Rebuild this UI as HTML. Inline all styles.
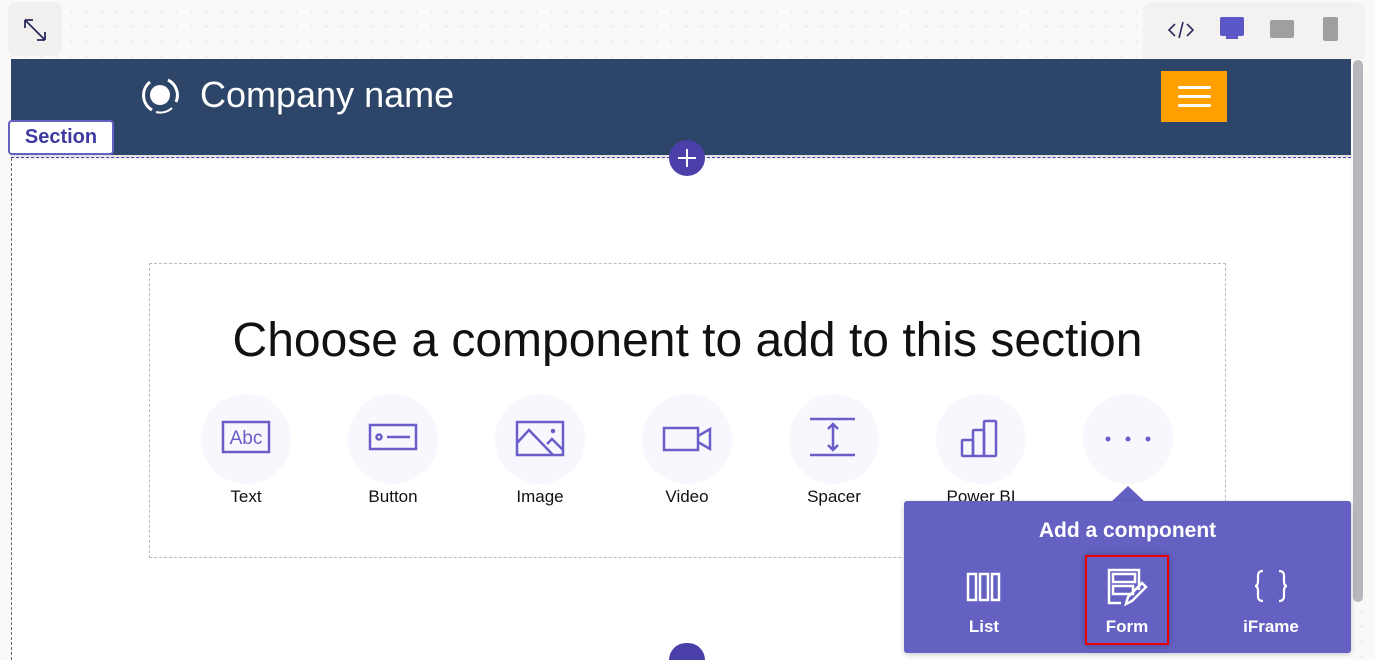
<!DOCTYPE html>
<html><head><style>
*{margin:0;padding:0;box-sizing:border-box}
html,body{width:1375px;height:660px;overflow:hidden}
body{position:relative;font-family:"Liberation Sans",sans-serif;
background-color:#faf9f8;background-image:radial-gradient(#eceae8 1.2px,transparent 1.3px);background-size:15px 15px;background-position:4px 4px}
.abs{position:absolute}
.circ{position:absolute;width:90px;height:90px;border-radius:50%;background:#f8f7fd;top:394px}
.lbl{position:absolute;top:487px;width:120px;text-align:center;font-size:17px;color:#111}
</style></head><body>
<div class="abs" style="left:8px;top:2px;width:54px;height:54px;background:#f1f0ef;border-radius:8px"></div>
<svg class="abs" style="left:22px;top:17px" width="26" height="26" viewBox="0 0 26 26" fill="none" stroke="#2b2a5e" stroke-width="1.8"><path d="M3 3L23 23M3 3h8M3 3v8M23 23h-8M23 23v-8"/></svg>
<div class="abs" style="left:1143px;top:2px;width:222px;height:57px;background:#f3f2f1;border-radius:8px 8px 0 0"></div>
<svg class="abs" style="left:1168px;top:20px" width="26" height="20" fill="none" stroke="#2b2a5e" stroke-width="1.6"><path d="M7 4L1 10l6 6M19 4l6 6-6 6M15 2l-4 16"/></svg>
<div class="abs" style="left:1220px;top:17px;width:24px;height:19px;background:#5b57c8;border-radius:2px"></div>
<div class="abs" style="left:1226px;top:35px;width:12px;height:4px;border-top:2px solid #5b57c8;border-bottom:2px solid #5b57c8"></div>
<div class="abs" style="left:1270px;top:20px;width:24px;height:18px;background:#a19f9d;border-radius:2px"></div>
<div class="abs" style="left:1323px;top:17px;width:15px;height:24px;background:#a19f9d;border-radius:2px"></div>
<div class="abs" style="left:11px;top:59px;width:1340px;height:601px;background:#fff"></div>
<div class="abs" style="left:11px;top:59px;width:1340px;height:96px;background:#2d4569"></div>
<div class="abs" style="left:11px;top:155px;width:1340px;height:6px;background:linear-gradient(#ddd,#fff)"></div>
<div class="abs" style="left:11px;top:157px;width:1340px;border-top:1px dashed #4b3faa"></div>
<div class="abs" style="left:11px;top:158px;height:502px;border-left:1px dashed #666"></div>
<svg class="abs" style="left:140px;top:74px" width="42" height="42" viewBox="0 0 42 42"><circle cx="20" cy="21" r="10" fill="#fff"/><path d="M10 8A17 17 0 0 0 12 36" stroke="#fff" stroke-width="3" fill="none"/><path d="M28 6A17 17 0 0 1 36 28" stroke="#fff" stroke-width="3" fill="none"/><path d="M32 34A17 17 0 0 1 16 38" stroke="#fff" stroke-width="2" fill="none"/></svg>
<div class="abs" style="left:200px;top:74px;font-size:36px;color:#fff">Company name</div>
<div class="abs" style="left:1161px;top:71px;width:66px;height:51px;background:#ffa000"></div>
<div class="abs" style="left:1178px;top:86px;width:33px;height:3px;background:#fff;box-shadow:0 9px 0 #fff,0 18px 0 #fff;border-radius:2px"></div>
<div class="abs" style="left:8px;top:120px;width:106px;height:35px;background:#fff;border:2px solid #6461c2;border-radius:4px;text-align:center;font-weight:bold;font-size:20px;color:#3d3aa0;line-height:31px">Section</div>
<div class="abs" style="left:669px;top:140px;width:36px;height:36px;border-radius:50%;background:#4b3faa"></div>
<div class="abs" style="left:678px;top:157px;width:18px;height:2px;background:#fff"></div>
<div class="abs" style="left:686px;top:149px;width:2px;height:18px;background:#fff"></div>
<div class="abs" style="left:669px;top:643px;width:36px;height:17px;border-radius:18px 18px 0 0;background:#4b3faa"></div>
<div class="abs" style="left:1353px;top:60px;width:10px;height:542px;background:#b8b7bc;border-radius:5px"></div>
<div class="abs" style="left:149px;top:263px;width:1077px;height:295px;border:1px dashed #bbb"></div>
<div class="abs" style="left:149px;top:313px;width:1077px;text-align:center;font-size:48px;color:#111">Choose a component to add to this section</div>
<div class="circ" style="left:201px"></div><div class="circ" style="left:348px"></div><div class="circ" style="left:495px"></div><div class="circ" style="left:642px"></div><div class="circ" style="left:789px"></div><div class="circ" style="left:936px"></div><div class="circ" style="left:1083px"></div>
<svg class="abs" style="left:0;top:0" width="1375" height="660" fill="none" stroke="#6a5fc9" stroke-width="2.5">
<rect x="223" y="422" width="46" height="30"/>
<text x="246" y="444" font-size="19" fill="#6a5fc9" stroke="none" text-anchor="middle" font-family="Liberation Sans,sans-serif">Abc</text>
<rect x="370" y="425" width="46" height="24"/><circle cx="379" cy="437" r="2.5"/><path d="M387 437h23"/>
<rect x="517" y="422" width="46" height="33"/><path d="M517 443l12-13 24 25M547 444l5-5 11 11"/><circle cx="553" cy="431" r="1" fill="#6a5fc9"/>
<rect x="664" y="428" width="34" height="22"/><path d="M698 436l12-7v20l-12-7"/>
<path d="M810 419h45M810 455h45M833 424v26M828 429l5-5 5 5M828 445l5 5 5-5"/>
<rect x="962" y="440" width="11" height="16" rx="1"/><rect x="973" y="430" width="11" height="26" rx="1"/><rect x="984" y="421" width="12" height="35" rx="1"/>
<g fill="#6a5fc9" stroke="none"><circle cx="1108" cy="439" r="2.5"/><circle cx="1128" cy="439" r="2.5"/><circle cx="1148" cy="439" r="2.5"/></g>
</svg>
<div class="lbl" style="left:186px">Text</div><div class="lbl" style="left:333px">Button</div><div class="lbl" style="left:480px">Image</div><div class="lbl" style="left:627px">Video</div><div class="lbl" style="left:774px">Spacer</div><div class="lbl" style="left:921px">Power BI</div>
<div class="abs" style="left:1111px;top:486px;width:0;height:0;border-left:17px solid transparent;border-right:17px solid transparent;border-bottom:16px solid #6461c2"></div>
<div class="abs" style="left:904px;top:501px;width:447px;height:152px;background:#6461c2;border-radius:3px;box-shadow:0 2px 6px rgba(0,0,0,.2)"></div>
<div class="abs" style="left:904px;top:519px;width:447px;text-align:center;color:#fff;font-weight:bold;font-size:21px">Add a component</div>
<div class="abs" style="left:1085px;top:555px;width:84px;height:90px;border:2px solid #e00;box-shadow:0 0 6px rgba(0,0,0,.3)"></div>
<svg class="abs" style="left:0;top:0" width="1375" height="660" fill="none" stroke="#fff" stroke-width="2.5">
<rect x="968" y="574" width="8" height="26"/><rect x="980" y="574" width="8" height="26"/><rect x="992" y="574" width="7" height="26"/>
<path d="M1139 590v-20h-30v33h12M1113 574h22v8h-22zM1113 586h20v8h-20z"/><path d="M1126 604l2-7 14-14 4 4-14 14z"/>
<path d="M1263 571c-4 0-5 2-5 5v5c0 3-1 5-3 5 2 0 3 2 3 5v5c0 3 1 5 5 5M1279 571c4 0 5 2 5 5v5c0 3 1 5 3 5-2 0-3 2-3 5v5c0 3-1 5-5 5" stroke-width="2.2"/>
</svg>
<div class="abs" style="left:944px;top:617px;width:80px;text-align:center;color:#fff;font-weight:bold;font-size:17px">List</div>
<div class="abs" style="left:1087px;top:617px;width:80px;text-align:center;color:#fff;font-weight:bold;font-size:17px">Form</div>
<div class="abs" style="left:1231px;top:617px;width:80px;text-align:center;color:#fff;font-weight:bold;font-size:17px">iFrame</div>
</body></html>
